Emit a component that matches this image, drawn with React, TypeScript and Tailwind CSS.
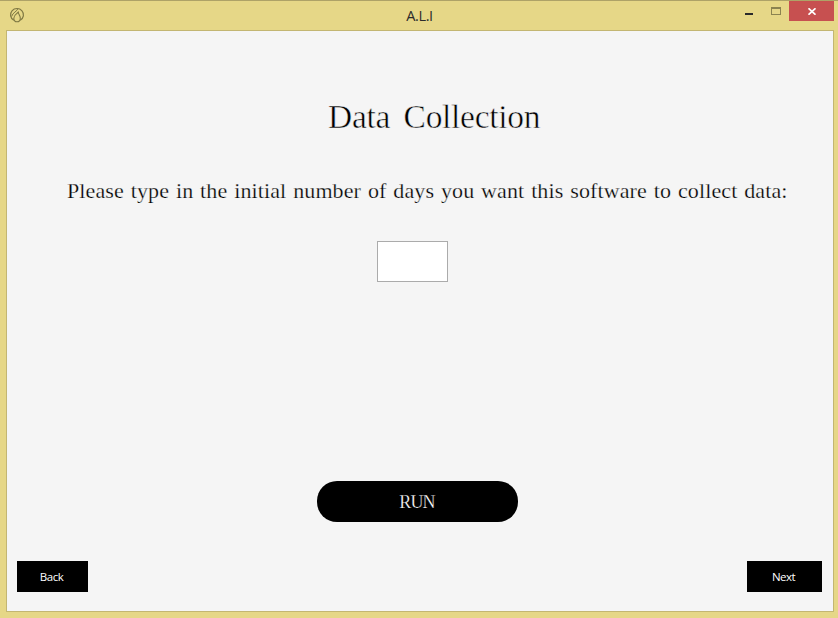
const serif = "font-['Liberation_Serif',serif]";

function TitleBar() {
  return (
    <header className="flex h-[29px] shrink-0 items-start">
      <div className="flex w-[380px] pl-[9px] pt-[6px]">
        <svg width="16" height="16" viewBox="0 0 16 16" fill="none" stroke="#7f7843">
          <path d="M4.800 13.300A6.500 6.300 0 1 1 11.200 13.300" strokeWidth="1.2" />
          <path d="M8.900 1.500C8.500 4.300 3.500 5.500 2.600 9.500" strokeWidth="1" />
          <path d="M9.300 5.200C8 6.500 4.800 8 4.800 11.200c0 2.100 1.300 3.600 3.200 3.600s3.300-1.500 3.300-3.600c0-2.400-1.700-3.600-2-6Z" strokeWidth="1.1" />
        </svg>
      </div>
      <h1 className="w-[79px] pt-[5px] text-center font-['Open_Sans',sans-serif] text-[14.5px] leading-[20px] tracking-[-0.4px] text-[#2b2b2b]">A.L.I</h1>
      <div className="ml-auto flex pr-[4px]">
        <div className="flex h-5 w-[27px] items-start pl-[1px] pt-[12px]">
          <button aria-label="Minimize" className="h-[2px] w-2 bg-[#2a2a2a]" />
        </div>
        <div className="flex h-5 w-[18px] items-start pt-[6px]">
          <button aria-label="Maximize" className="h-2 w-[10px] border border-t-2 border-[#8b8350]" />
        </div>
        <button aria-label="Close" className="flex h-5 w-[45px] items-center justify-center bg-[#c75050]">
          <svg width="8" height="7" viewBox="0 0 8 7" stroke="#fff" strokeWidth="1.7">
            <path d="M0.500 0.300 7.500 6.700M7.500 0.300 0.500 6.700" />
          </svg>
        </button>
      </div>
    </header>
  );
}

export default function App() {
  return (
    <div className="flex h-[618px] w-[838px] flex-col border-t border-[#aea267] bg-[#e6d787]">
      <TitleBar />
      <main className="ml-[6px] mr-[4px] flex h-[582px] flex-col border border-[#c3b672] bg-[#f5f5f5] text-black">
        <h2 className={`${serif} ml-[321px] mt-[66px] h-10 whitespace-nowrap text-[33.5px] leading-[40px] tracking-[-0.3px] [word-spacing:5.5px] [-webkit-text-stroke:0.5px_#f5f5f5]`}>Data Collection</h2>
        <label htmlFor="days" className={`${serif} ml-[60px] mt-[38px] h-8 whitespace-nowrap text-[22px] leading-[32px] tracking-[0.12px] [word-spacing:1.2px] [-webkit-text-stroke:0.25px_#f5f5f5]`}>
          Please type in the initial number of days you want this software to collect data:
        </label>
        <input id="days" className="ml-[370px] mt-[34px] h-[41px] w-[71px] border border-[#ababab] bg-white px-2 outline-none" />
        <button className={`${serif} ml-[310px] mt-[199px] h-[41px] w-[201px] rounded-[20px] bg-black pr-[1px] pt-[2px] text-[18px] tracking-[-0.8px] text-white [-webkit-text-stroke:0.25px_#000]`}>RUN</button>
        <footer className="mt-[39px] flex justify-between pl-[10px] pr-[11px] font-['Open_Sans',sans-serif] text-[11.5px] tracking-[-0.5px] text-white">
          <button className="h-[31px] w-[71px] bg-black pr-[2px] pt-[1px]">Back</button>
          <button className="h-[31px] w-[75px] bg-black pr-[2px] pt-[1px]">Next</button>
        </footer>
      </main>
    </div>
  );
}
